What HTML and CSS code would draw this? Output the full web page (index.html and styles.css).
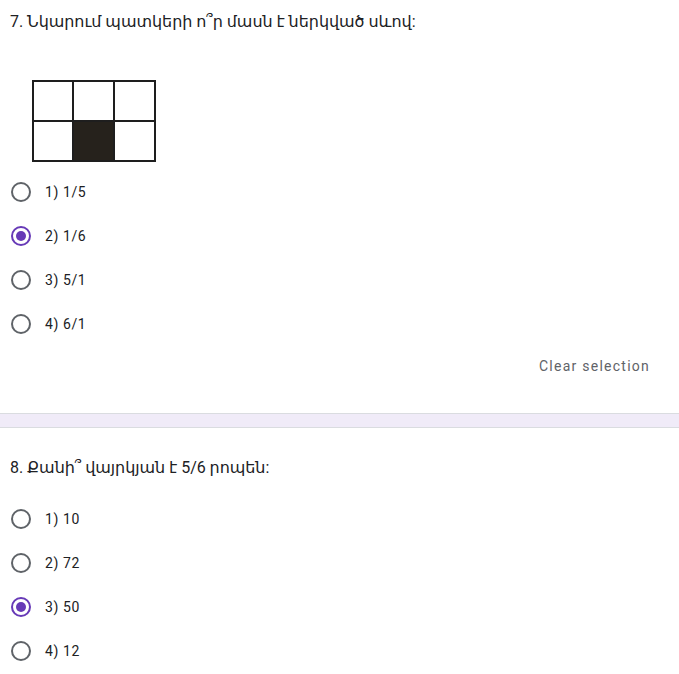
FILE: index.html
```html
<!DOCTYPE html>
<html lang="hy">
<head>
<meta charset="utf-8">
<link rel="stylesheet" href="styles.css">
</head>
<body>
<section class="question q1">
  <div class="title">7. Նկարում պատկերի ո՞ր մասն է ներկված սևով:</div>
  <div class="figure">
    <div class="cell"></div><div class="cell"></div><div class="cell"></div>
    <div class="cell"></div><div class="cell dark"></div><div class="cell"></div>
  </div>
  <div class="options">
    <div class="option"><span class="radio"></span><span class="label">1) 1/5</span></div>
    <div class="option"><span class="radio checked"></span><span class="label">2) 1/6</span></div>
    <div class="option"><span class="radio"></span><span class="label">3) 5/1</span></div>
    <div class="option"><span class="radio"></span><span class="label">4) 6/1</span></div>
  </div>
  <div class="clear-row"><span class="clear">Clear selection</span></div>
</section>
<div class="band"></div>
<section class="question q2">
  <div class="title">8. Քանի՞ վայրկյան է 5/6 րոպեն:</div>
  <div class="options">
    <div class="option"><span class="radio"></span><span class="label">1) 10</span></div>
    <div class="option"><span class="radio"></span><span class="label">2) 72</span></div>
    <div class="option"><span class="radio checked"></span><span class="label">3) 50</span></div>
    <div class="option"><span class="radio"></span><span class="label">4) 12</span></div>
  </div>
</section>
</body>
</html>
```
FILE: styles.css
```css
html, body {
  margin: 0;
  padding: 0;
  background: #ffffff;
}
body {
  font-family: Roboto, "DejaVu Sans", sans-serif;
  color: #202124;
}
.question {
  display: flex;
  flex-direction: column;
  padding-left: 10px;
}
.q1 {
  padding-top: 10px;
}
.q2 {
  padding-top: 28px;
}
.title {
  font-size: 16px;
  line-height: 24px;
  color: #202124;
  letter-spacing: -0.05px;
}
.figure {
  margin-top: 46px;
  margin-left: 22px;
  display: grid;
  grid-template-columns: 38px 39px 39px;
  grid-template-rows: 38px 38px;
  gap: 2px;
  padding: 2px;
  background: #1e1e1e;
  width: max-content;
}
.cell {
  background: #ffffff;
}
.cell.dark {
  background: #26221c;
}
.options {
  display: flex;
  flex-direction: column;
  margin-top: 8px;
}
.q2 .options {
  margin-top: 17px;
}
.option {
  height: 44px;
  display: flex;
  align-items: center;
}
.radio {
  box-sizing: border-box;
  width: 20px;
  height: 20px;
  border: 2px solid #5f6368;
  border-radius: 50%;
  display: flex;
  align-items: center;
  justify-content: center;
  flex-shrink: 0;
  margin-left: 1px;
}
.radio.checked {
  border-color: #673ab7;
}
.radio.checked::after {
  content: "";
  width: 10px;
  height: 10px;
  border-radius: 50%;
  background: #673ab7;
}
.label {
  margin-left: 14px;
  font-size: 14px;
  letter-spacing: 0.6px;
  color: #202124;
}
.clear-row {
  display: flex;
  justify-content: flex-end;
  padding-right: 29px;
  margin-top: 10px;
  height: 20px;
  align-items: center;
}
.clear {
  font-size: 14px;
  letter-spacing: 1.25px;
  color: #5f6368;
}
.band {
  margin-top: 37px;
  height: 13px;
  background: #f0ebf8;
  border-top: 1px solid #dadce0;
  border-bottom: 1px solid #dadce0;
}
```
